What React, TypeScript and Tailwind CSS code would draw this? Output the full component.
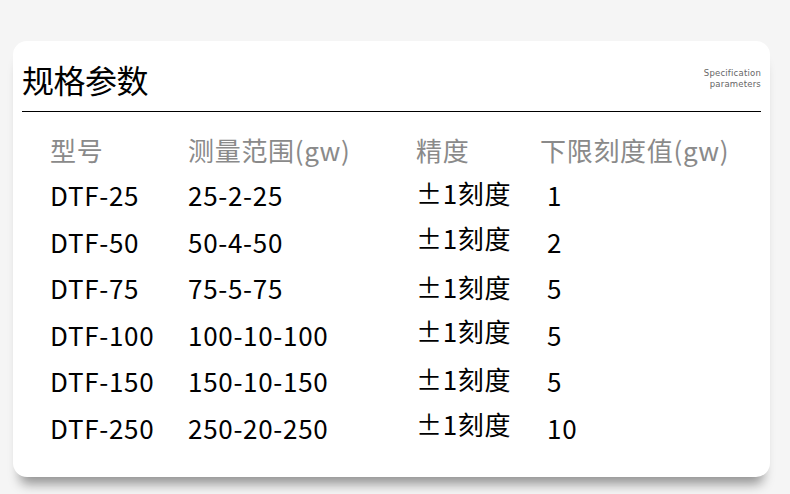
const rows = [
  { model: "DTF-25", range: "25-2-25", min: "1", shift: "-translate-y-[2px]" },
  { model: "DTF-50", range: "50-4-50", min: "2", shift: "-translate-y-[4px]" },
  { model: "DTF-75", range: "75-5-75", min: "5", shift: "-translate-y-[1px]" },
  { model: "DTF-100", range: "100-10-100", min: "5", shift: "-translate-y-[4px]" },
  { model: "DTF-150", range: "150-10-150", min: "5", shift: "-translate-y-[2px]" },
  { model: "DTF-250", range: "250-20-250", min: "10", shift: "-translate-y-[4px]" },
];

const cjk = { fontFamily: '"Noto Sans CJK SC", "Noto Sans", sans-serif' };

export default function App() {
  return (
    <div className="w-[790px] h-[494px] bg-[#f5f5f5] pt-[41px] pl-[13px]" style={cjk}>
      <div className="w-[757px] h-[436px] bg-white rounded-[14px] shadow-[0_14px_12px_-7px_rgba(0,0,0,0.4)] px-[9px] pt-[18px]">
        <div className="flex items-center justify-between pb-[12px] border-b border-black">
          <h1 className="text-[32px] leading-[40px] font-normal tracking-[-0.5px] text-black">规格参数</h1>
          <div
            className="text-right text-[8.5px] leading-[11px] text-[#666] tracking-[0.2px]"
            style={{ fontFamily: '"DejaVu Sans", sans-serif' }}
          >
            <div>Specification</div>
            <div>parameters</div>
          </div>
        </div>

        <div className="mt-[16px] ml-[28px] grid grid-cols-[138px_228px_124px_1fr] text-[26px] tracking-[0.7px]">
          <div className="h-[44px] leading-[44px] text-[#8a8a8a]">型号</div>
          <div className="h-[44px] leading-[44px] text-[#8a8a8a]">测量范围(gw)</div>
          <div className="h-[44px] leading-[44px] text-[#8a8a8a]">精度</div>
          <div className="h-[44px] leading-[44px] text-[#8a8a8a]">下限刻度值(gw)</div>
          {rows.map((r) => (
            <div key={r.model} className="contents text-black">
              <div className="h-[46.6px] leading-[46.6px]">{r.model}</div>
              <div className="h-[46.6px] leading-[46.6px]">{r.range}</div>
              <div className={`h-[46.6px] leading-[46.6px] ${r.shift}`}>±1刻度</div>
              <div className="h-[46.6px] leading-[46.6px] pl-[7px]">{r.min}</div>
            </div>
          ))}
        </div>
      </div>
    </div>
  );
}
